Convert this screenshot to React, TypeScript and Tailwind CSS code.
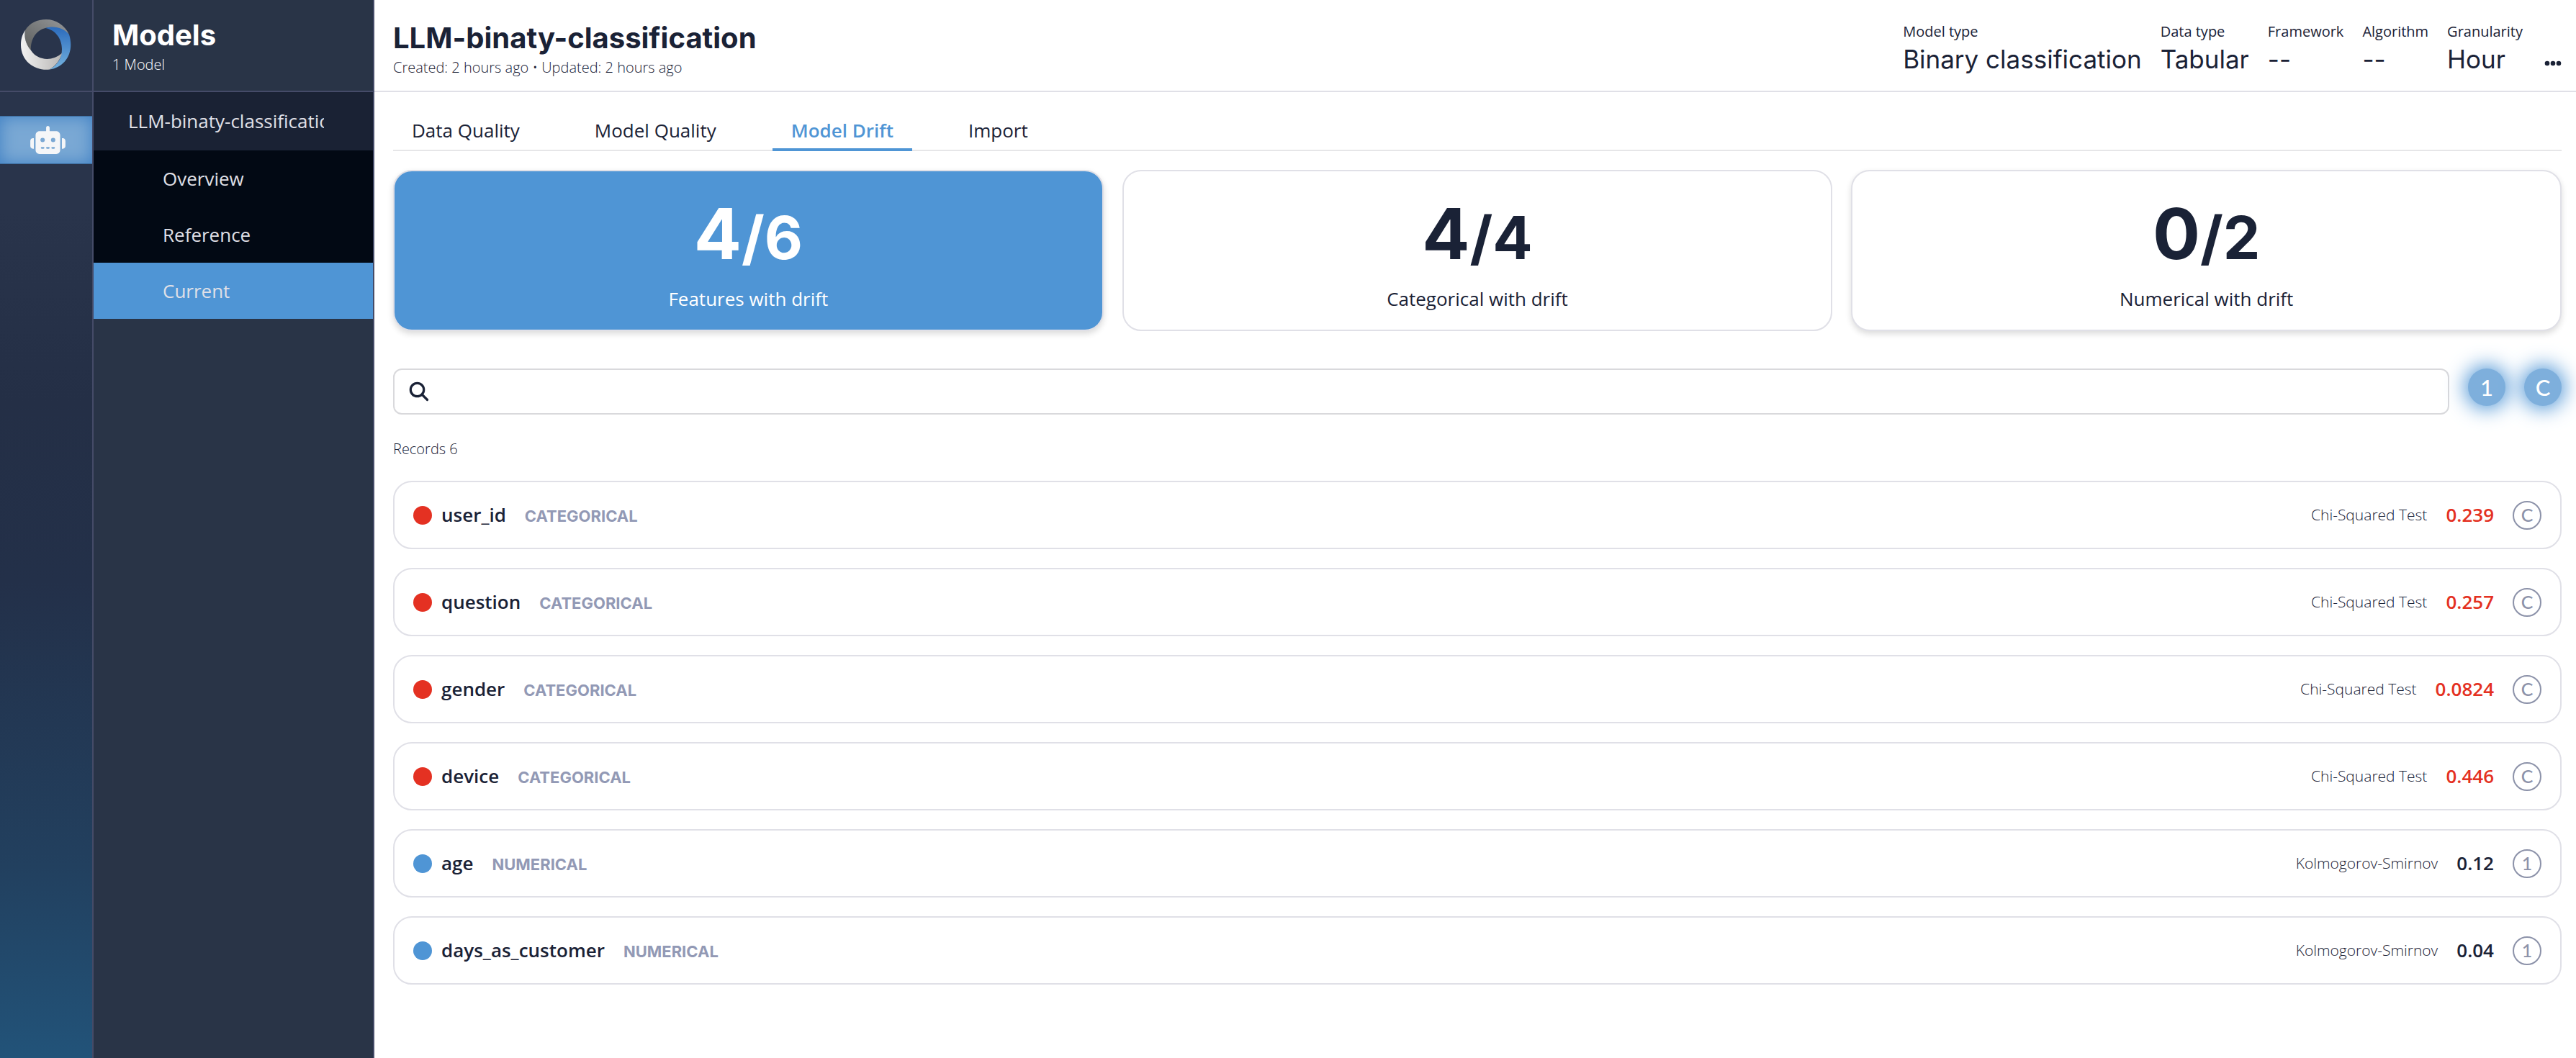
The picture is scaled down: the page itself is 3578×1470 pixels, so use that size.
import type { ReactNode } from 'react';

type Feature = { name: string; kind: 'CATEGORICAL' | 'NUMERICAL'; test: string; value: string; drift: boolean };

const features: Feature[] = [
  { name: 'user_id', kind: 'CATEGORICAL', test: 'Chi-Squared Test', value: '0.239', drift: true },
  { name: 'question', kind: 'CATEGORICAL', test: 'Chi-Squared Test', value: '0.257', drift: true },
  { name: 'gender', kind: 'CATEGORICAL', test: 'Chi-Squared Test', value: '0.0824', drift: true },
  { name: 'device', kind: 'CATEGORICAL', test: 'Chi-Squared Test', value: '0.446', drift: true },
  { name: 'age', kind: 'NUMERICAL', test: 'Kolmogorov-Smirnov', value: '0.12', drift: false },
  { name: 'days_as_customer', kind: 'NUMERICAL', test: 'Kolmogorov-Smirnov', value: '0.04', drift: false },
];

const meta = [
  ['Model type', 'Binary classification'],
  ['Data type', 'Tabular'],
  ['Framework', '--'],
  ['Algorithm', '--'],
  ['Granularity', 'Hour'],
];

const tabs = ['Data Quality', 'Model Quality', 'Model Drift', 'Import'];

function Logo() {
  return (
    <svg viewBox="0 0 70 70" className="size-[70px]" aria-label="Home">
      <defs>
        <linearGradient id="grey" x1="0" y1="1" x2="1" y2="0">
          <stop offset="0" stopColor="#5b5d5c" />
          <stop offset="1" stopColor="#97999b" />
        </linearGradient>
        <linearGradient id="blue" x1="0" y1="0" x2="0" y2="1">
          <stop offset="0" stopColor="#2b6bbd" />
          <stop offset="1" stopColor="#74b2de" />
        </linearGradient>
        <linearGradient id="white" x1="0" y1="0" x2="1" y2="0">
          <stop offset="0" stopColor="#f2f2f2" />
          <stop offset="1" stopColor="#b8b6b4" />
        </linearGradient>
      </defs>
      <path d="M6 15C12 5 23 0 35 0C49 0 61 8 67 21C58 12 45 9 34 12C21 15 13 28 14 43C7 35 4 25 6 15Z" fill="url(#grey)" />
      <path d="M34 12C46 8 60 12 67 21C75 46 61 67 40 69.500C51 63 57 54 57 41C57 26 47 14 34 12Z" fill="url(#blue)" />
      <path d="M6 15C4 25 7 35 14 43C23 57 43 59 57 47C54 57 49 64 40 69.500C22 72 0 60 0 35C0 27 2 21 6 15Z" fill="url(#white)" />
    </svg>
  );
}

function Robot() {
  return (
    <svg viewBox="0 0 640 512" className="h-[39px] w-[49px]" fill="#f5f6f8" aria-hidden="true">
      <path d="M320 0c17.700 0 32 14.300 32 32V96H472c39.800 0 72 32.200 72 72V440c0 39.800-32.200 72-72 72H168c-39.800 0-72-32.200-72-72V168c0-39.800 32.200-72 72-72H288V32c0-17.700 14.300-32 32-32zM208 384c-8.800 0-16 7.200-16 16s7.200 16 16 16h32c8.800 0 16-7.200 16-16s-7.200-16-16-16H208zm96 0c-8.800 0-16 7.200-16 16s7.200 16 16 16h32c8.800 0 16-7.200 16-16s-7.200-16-16-16H304zm96 0c-8.800 0-16 7.200-16 16s7.200 16 16 16h32c8.800 0 16-7.200 16-16s-7.200-16-16-16H400zM264 256a40 40 0 1 0-80 0 40 40 0 1 0 80 0zm152 40a40 40 0 1 0 0-80 40 40 0 1 0 0 80zM48 224H64V416H48c-26.500 0-48-21.500-48-48V272c0-26.500 21.500-48 48-48zm544 0c26.500 0 48 21.500 48 48v96c0 26.500-21.500 48-48 48H576V224h16z" />
    </svg>
  );
}

function Badge({ kind }: { kind: Feature['kind'] }) {
  return (
    <span className="flex size-10 items-center justify-center rounded-full border-2 border-[#8c92a9] font-['Lato'] text-[25px] leading-none font-medium text-[#8c92a9]">
      {kind === 'NUMERICAL' ? '1' : 'C'}
    </span>
  );
}

function Card({ big, small, label, active, shadow }: { big: string; small: string; label: string; active?: boolean; shadow?: boolean }) {
  return (
    <button
      type="button"
      className={`flex h-56 flex-1 flex-col items-center justify-center rounded-[26px] border-2 border-[#e0e0e7] pt-3 pb-1 ${active ? 'bg-[#4f95d5] text-white' : 'bg-white text-[#1a2236]'} ${shadow ? 'shadow-[0_4px_8px_rgba(0,0,0,0.14)]' : ''}`}
    >
      <span className="font-['Inter'] text-[98px] leading-[112px] font-bold">
        {big}
        <span className="text-[82px]">/{small}</span>
      </span>
      <span className="mt-2 text-[26px] leading-[40px]">{label}</span>
    </button>
  );
}

function Glow({ label, children }: { label: string; children: ReactNode }) {
  return (
    <button
      type="button"
      aria-label={label}
      className="flex size-[52px] items-center justify-center rounded-full bg-[#7eafdc] font-['Lato'] text-[31px] leading-none font-medium text-white shadow-[0_0_28px_4px_#4f95d5]"
    >
      {children}
    </button>
  );
}

export default function App() {
  return (
    <div className="flex min-h-screen bg-white font-['Open_Sans',sans-serif] text-[26px] text-[#1a2236]">
      <nav className="flex w-[130px] shrink-0 flex-col border-r-2 border-[#454b68] bg-[linear-gradient(180deg,#29344b_0%,#29344b_20%,#242f46_38%,#233049_55%,#22405f_82%,#225379_100%)]">
        <a href="#home" className="flex h-32 items-center justify-center border-b-2 border-[#454b68] pb-0.5">
          <Logo />
        </a>
        <a
          href="#models"
          aria-label="Models"
          className="mt-[33px] flex h-[67px] items-center justify-center border-y border-[#3c6d9f] bg-[#7aa8d4] pl-1 shadow-[inset_0_0_22px_#3f80c4]"
        >
          <Robot />
        </a>
      </nav>

      <aside className="flex w-[390px] shrink-0 flex-col border-r-2 border-[#454b68] bg-[#293447]">
        <div className="flex h-32 flex-col border-b-2 border-[#454b68] px-[26px] pt-6 text-white">
          <h2 className="font-['Inter'] text-[40px] leading-[50px] font-bold">Models</h2>
          <p className="text-[20px] leading-8 font-light">1 Model</p>
        </div>
        <ul className="text-[#e0e0e7]">
          <li className="flex h-[81px] items-center bg-[#1a2234] pr-[68px] pl-12">
            <a href="#model" className="overflow-hidden whitespace-nowrap">LLM-binaty-classification</a>
          </li>
          {['Overview', 'Reference', 'Current'].map((item) => (
            <li key={item} className={item === 'Current' ? 'bg-[#4f95d5]' : 'bg-[#020914]'}>
              <a href={`#${item}`} className="flex h-[78px] items-center pl-24">{item}</a>
            </li>
          ))}
        </ul>
      </aside>

      <main className="min-w-0 flex-1">
        <header className="flex h-32 justify-between border-b-2 border-[#e0e0e7] pr-5 pl-[26px]">
          <div className="pt-7">
            <h1 className="font-['Inter'] text-[40px] leading-[50px] font-bold">LLM-binaty-classification</h1>
            <p className="text-[20px] leading-8 font-light">Created: 2 hours ago • Updated: 2 hours ago</p>
          </div>
          <div className="flex gap-[26px] pt-7">
            {meta.map(([label, value]) => (
              <div key={label}>
                <p className="text-[20px] leading-8">{label}</p>
                <p className="font-['Inter'] text-[35px] leading-[44px]">{value}</p>
              </div>
            ))}
            <button type="button" aria-label="More actions" className="flex h-[68px] items-end justify-end pb-1 pl-1">
              <svg viewBox="0 0 24 8" className="h-2 w-6" fill="#1a2236">
                <circle cx="4" cy="4" r="3.300" />
                <circle cx="12" cy="4" r="3.300" />
                <circle cx="20" cy="4" r="3.300" />
              </svg>
            </button>
          </div>
        </header>

        <div className="pt-[26px] pr-5 pl-[26px]">
          <div role="tablist" className="flex h-14 gap-[52px] border-b-2 border-[#e6e6e8]">
            {tabs.map((tab) => (
              <button
                key={tab}
                type="button"
                role="tab"
                aria-selected={tab === 'Model Drift'}
                className={`h-14 border-b-4 px-[26px] pt-0.5 ${tab === 'Model Drift' ? 'border-[#4f95d5] font-semibold text-[#4f95d5]' : 'border-transparent'}`}
              >
                {tab}
              </button>
            ))}
          </div>

          <div className="mt-[26px] flex gap-[26px]">
            <Card big="4" small="6" label="Features with drift" active shadow />
            <Card big="4" small="4" label="Categorical with drift" />
            <Card big="0" small="2" label="Numerical with drift" shadow />
          </div>

          <div className="mt-[52px] flex gap-[26px]">
            <label className="flex h-16 flex-1 items-center gap-3 rounded-xl border-2 border-[#d9d9dc] px-5">
              <svg viewBox="0 0 28 28" className="size-[28px]" fill="none" stroke="#1a2236" strokeWidth="3.200" strokeLinecap="round" aria-hidden="true">
                <circle cx="11.500" cy="11.500" r="9.200" />
                <path d="M18.500 18.500L25.500 25.500" />
              </svg>
              <input type="search" aria-label="Search features" className="min-w-0 flex-1 outline-none" />
            </label>
            <div className="flex gap-[26px]">
              <Glow label="Numerical">1</Glow>
              <Glow label="Categorical">C</Glow>
            </div>
          </div>

          <p className="mt-8 text-[20px] leading-8 font-light">Records 6</p>

          <ul className="mt-7 flex flex-col gap-[26px]">
            {features.map((f) => (
              <li key={f.name} className="flex h-[95px] items-center rounded-[26px] border-2 border-[#e0e0e7] px-[26px]">
                <span className={`size-[26px] rounded-full ${f.drift ? 'bg-[#e43122]' : 'bg-[#4f95d5]'}`} />
                <span className="ml-[13px] font-semibold">{f.name}</span>
                <span className="ml-[26px] pt-1 font-['Inter'] text-[22px] font-bold text-[#9299b5]">{f.kind}</span>
                <span className="ml-auto text-[21px] font-light">{f.test}</span>
                <span className={`mx-[26px] font-semibold ${f.drift ? 'text-[#e43122]' : ''}`}>{f.value}</span>
                <Badge kind={f.kind} />
              </li>
            ))}
          </ul>
        </div>
      </main>
    </div>
  );
}
